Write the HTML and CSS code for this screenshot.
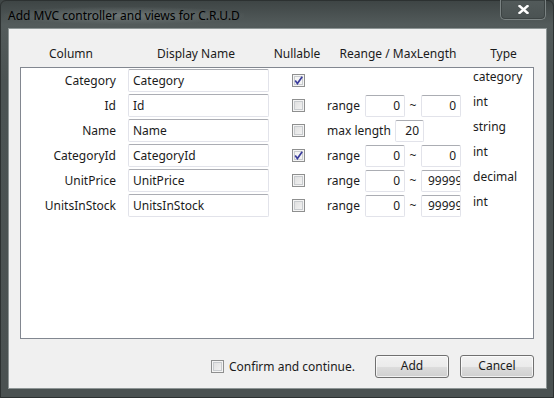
FILE: index.html
```html
<!DOCTYPE html>
<html lang="en">
<head>
    <meta charset="UTF-8">
    <meta name="viewport" content="width=device-width, initial-scale=1.0">
    <title>Add MVC controller and views for C.R.U.D</title>
    <link rel="stylesheet" href="styles.css">
</head>
<body>
    <div class="window">
        <div class="titlebar">
            <span class="title">Add MVC controller and views for C.R.U.D</span>
            <div class="close-btn">
                <svg width="11" height="9" viewBox="0 0 11 9">
                    <path d="M1.5 1 L9.5 8 M9.5 1 L1.5 8" stroke="#ffffff" stroke-width="2.4" stroke-linecap="square"/>
                </svg>
            </div>
        </div>

        <div class="client">
            <div class="header">
                <span class="h-column">Column</span>
                <span class="h-display">Display Name</span>
                <span class="h-nullable">Nullable</span>
                <span class="h-range">Reange / MaxLength</span>
                <span class="h-type">Type</span>
            </div>

            <div class="list">
                <div class="row">
                    <span class="label">Category</span>
                    <div class="textbox">Category</div>
                    <div class="check-cell"><span class="checkbox checked"><svg width="11" height="11" viewBox="0 0 11 11"><path d="M2.2 5.6 L4.4 8.6 L9.2 1.8" fill="none" stroke="#3b3d9c" stroke-width="1.7"/></svg></span></div>
                    <div class="range"></div>
                    <span class="type">category</span>
                </div>
                <div class="row">
                    <span class="label">Id</span>
                    <div class="textbox">Id</div>
                    <div class="check-cell"><span class="checkbox"></span></div>
                    <div class="range">
                        <span class="range-label">range</span>
                        <div class="numbox">0</div>
                        <span class="tilde">~</span>
                        <div class="numbox">0</div>
                    </div>
                    <span class="type">int</span>
                </div>
                <div class="row">
                    <span class="label">Name</span>
                    <div class="textbox">Name</div>
                    <div class="check-cell"><span class="checkbox"></span></div>
                    <div class="range">
                        <span class="max-label">max length</span>
                        <div class="numbox short">20</div>
                    </div>
                    <span class="type">string</span>
                </div>
                <div class="row">
                    <span class="label">CategoryId</span>
                    <div class="textbox">CategoryId</div>
                    <div class="check-cell"><span class="checkbox checked"><svg width="11" height="11" viewBox="0 0 11 11"><path d="M2.2 5.6 L4.4 8.6 L9.2 1.8" fill="none" stroke="#3b3d9c" stroke-width="1.7"/></svg></span></div>
                    <div class="range">
                        <span class="range-label">range</span>
                        <div class="numbox">0</div>
                        <span class="tilde">~</span>
                        <div class="numbox">0</div>
                    </div>
                    <span class="type">int</span>
                </div>
                <div class="row">
                    <span class="label">UnitPrice</span>
                    <div class="textbox">UnitPrice</div>
                    <div class="check-cell"><span class="checkbox"></span></div>
                    <div class="range">
                        <span class="range-label">range</span>
                        <div class="numbox">0</div>
                        <span class="tilde">~</span>
                        <div class="numbox">99999</div>
                    </div>
                    <span class="type">decimal</span>
                </div>
                <div class="row">
                    <span class="label">UnitsInStock</span>
                    <div class="textbox">UnitsInStock</div>
                    <div class="check-cell"><span class="checkbox"></span></div>
                    <div class="range">
                        <span class="range-label">range</span>
                        <div class="numbox">0</div>
                        <span class="tilde">~</span>
                        <div class="numbox">99999</div>
                    </div>
                    <span class="type">int</span>
                </div>
            </div>

            <div class="footer">
                <label class="confirm">
                    <span class="checkbox"></span>
                    <span>Confirm and continue.</span>
                </label>
                <div class="button add-btn">Add</div>
                <div class="button">Cancel</div>
            </div>
        </div>
    </div>
</body>
</html>
```

FILE: styles.css
```css
* {
    margin: 0;
    padding: 0;
    box-sizing: border-box;
}

body {
    width: 554px;
    height: 398px;
    background: #3f4646;
    font-family: 'Noto Sans', 'Open Sans', sans-serif;
    font-size: 12px;
    color: #1b1b1b;
    overflow: hidden;
}

.window {
    width: 554px;
    height: 398px;
    background: linear-gradient(180deg, #3e4545 0%, #535b5b 6%, #4b5353 20%, #4a5151 100%);
    border: 1px solid #2c3131;
    border-radius: 6px 6px 0 0;
    display: flex;
    flex-direction: column;
}

/* title bar */
.titlebar {
    height: 27px;
    display: flex;
    align-items: flex-start;
    justify-content: space-between;
    padding-left: 7px;
    padding-right: 7px;
}

.title {
    margin-top: 6px;
    padding: 0 4px;
    margin-left: -4px;
    font-size: 12px;
    color: #000000;
    background: radial-gradient(ellipse at center, rgba(150, 160, 160, 0.45) 0%, rgba(150, 160, 160, 0) 75%);
}

.close-btn {
    width: 46px;
    height: 20px;
    margin-top: -1px;
    border: 1px solid #7b8383;
    border-top: none;
    border-radius: 0 0 5px 5px;
    box-shadow: inset 0 0 0 1px #3c4343;
    background: linear-gradient(180deg, #535b5b, #4a5252);
    display: flex;
    align-items: center;
    justify-content: center;
}

/* client area */
.client {
    margin-left: 7px;
    width: 539px;
    height: 361px;
    background: #f0f0f0;
    border: 1px solid #8d9595;
    padding: 17px 0 0 11px;
}

.header {
    display: flex;
    height: 16px;
    line-height: 16px;
    margin-left: 1px;
    margin-bottom: 5px;
}

.header span {
    text-align: center;
    white-space: nowrap;
}

.h-column { width: 100px; }
.h-display { width: 150px; }
.h-nullable { width: 52px; }
.h-range { width: 150px; }
.h-type { width: 61px; }

.list {
    width: 514px;
    height: 272px;
    background: #ffffff;
    border: 1px solid #828790;
    padding-top: 1px;
    display: grid;
    grid-template-columns: 107px 141px 58px 146px 1fr;
    grid-auto-rows: 23px;
    row-gap: 2px;
    align-content: start;
}

.row {
    display: contents;
}

.label {
    text-align: right;
    padding-right: 12px;
    line-height: 23px;
    white-space: nowrap;
}

.textbox {
    height: 23px;
    border: 1px solid #e2e3ea;
    border-top-color: #abadb3;
    border-radius: 2px;
    padding-left: 4px;
    line-height: 21px;
    white-space: nowrap;
    overflow: hidden;
}

.check-cell {
    display: flex;
    align-items: center;
    padding-left: 23px;
}

.checkbox {
    width: 13px;
    height: 13px;
    border: 1px solid #8e8f8f;
    background: linear-gradient(135deg, #dcdcdc 0%, #f6f6f6 100%);
    box-shadow: inset 0 0 0 1px #f4f4f4, inset 0 0 0 2px #c8cbce;
    display: flex;
    align-items: center;
    justify-content: center;
}

.checkbox.checked {
    background: #f4f4f4;
}

.range {
    display: flex;
    align-items: center;
    white-space: nowrap;
}

.range-label {
    width: 38px;
}

.max-label {
    width: 68px;
}

.numbox {
    width: 40px;
    height: 22px;
    border: 1px solid #e2e3ea;
    border-top-color: #abadb3;
    border-radius: 2px;
    padding: 0 4px 0 6px;
    text-align: right;
    line-height: 20px;
    white-space: nowrap;
    overflow: hidden;
}

.numbox.short {
    width: 29px;
    padding: 0 4px;
}

.tilde {
    width: 16px;
    text-align: center;
}

.type {
    align-self: start;
    line-height: 16px;
    white-space: nowrap;
}

/* footer */
.footer {
    display: flex;
    align-items: center;
    justify-content: flex-end;
    margin-top: 16px;
    padding-right: 12px;
}

.confirm {
    display: flex;
    align-items: center;
    gap: 5px;
    margin-right: 20px;
}

.button {
    width: 74px;
    height: 23px;
    border: 1px solid #707070;
    border-radius: 3px;
    background: linear-gradient(180deg, #f2f2f2 0%, #ebebeb 50%, #dddddd 51%, #cfcfcf 100%);
    box-shadow: inset 0 0 0 1px rgba(255, 255, 255, 0.7);
    text-align: center;
    line-height: 20px;
}

.add-btn {
    margin-right: 11px;
}
```
